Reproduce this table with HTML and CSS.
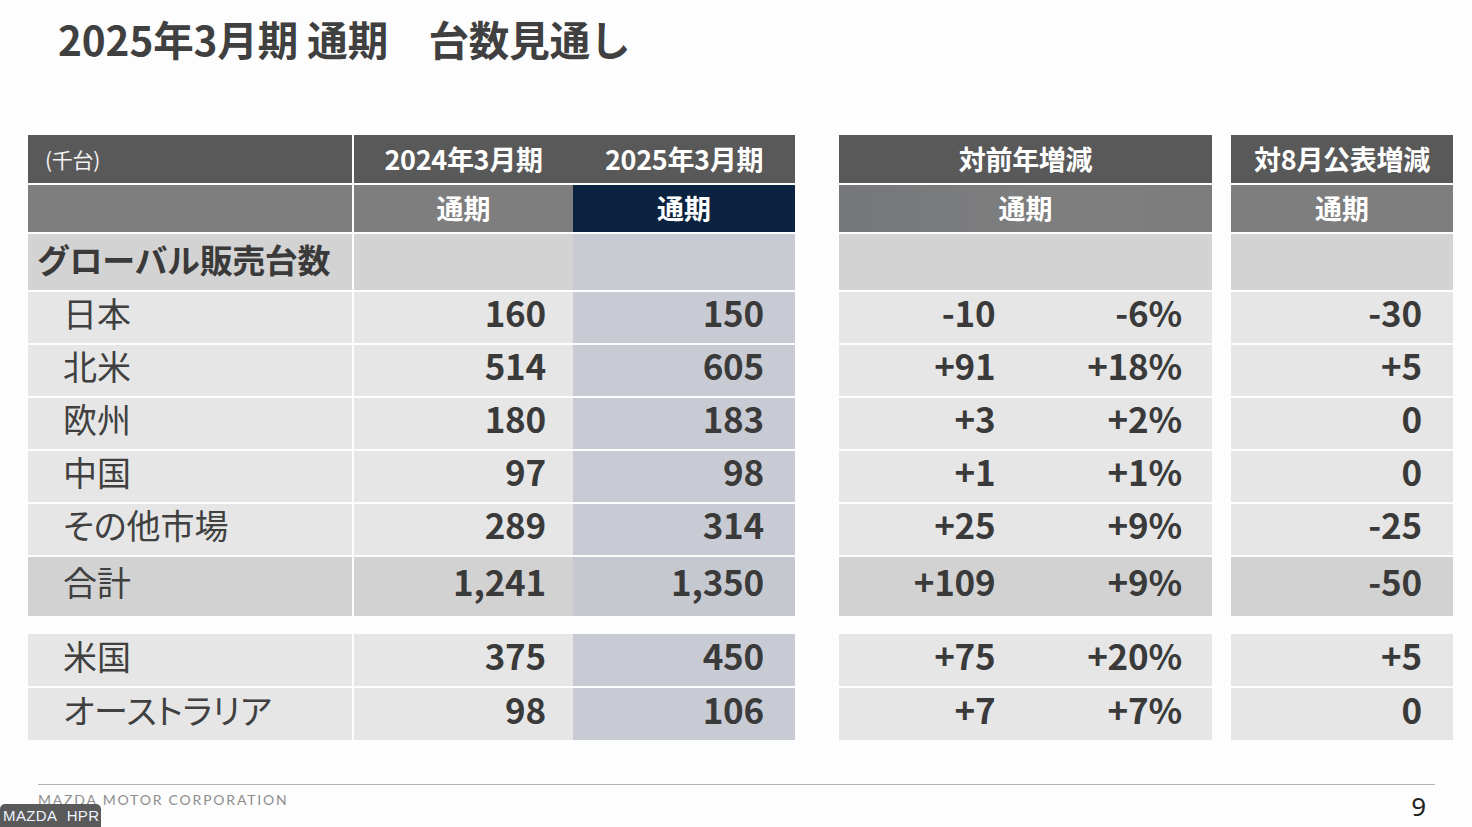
FILE: index.html
```html
<!DOCTYPE html>
<html lang="ja">
<head>
<meta charset="utf-8">
<title>2025年3月期 通期 台数見通し</title>
<link rel="stylesheet" href="styles.css">
</head>
<body>
<div class="slide">
  <h1 class="title">2025年3月期 通期　台数見通し</h1>

  <div class="tables">
    <!-- main table -->
    <div class="tbl tbl-main">
      <div class="blk">
        <div class="row r-h1">
          <div class="c c1 unit">(千台)</div>
          <div class="c c2 ctr">2024年3月期</div>
          <div class="c c3 ctr">2025年3月期</div>
        </div>
        <div class="row r-h2">
          <div class="c c1"></div>
          <div class="c c2 ctr">通期</div>
          <div class="c c3 ctr navy">通期</div>
        </div>
        <div class="row r-glb">
          <div class="c c1 glabel">グローバル販売台数</div>
          <div class="c c2"></div>
          <div class="c c3"></div>
        </div>
        <div class="row r-d"><div class="c c1 lbl">日本</div><div class="c c2 num">160</div><div class="c c3 num">150</div></div>
        <div class="row r-d"><div class="c c1 lbl">北米</div><div class="c c2 num">514</div><div class="c c3 num">605</div></div>
        <div class="row r-d"><div class="c c1 lbl">欧州</div><div class="c c2 num">180</div><div class="c c3 num">183</div></div>
        <div class="row r-d"><div class="c c1 lbl">中国</div><div class="c c2 num">97</div><div class="c c3 num">98</div></div>
        <div class="row r-d"><div class="c c1 lbl">その他市場</div><div class="c c2 num">289</div><div class="c c3 num">314</div></div>
        <div class="row r-tot"><div class="c c1 lbl">合計</div><div class="c c2 num">1,241</div><div class="c c3 num">1,350</div></div>
      </div>
      <div class="blk sub">
        <div class="row r-d r-s"><div class="c c1 lbl">米国</div><div class="c c2 num">375</div><div class="c c3 num">450</div></div>
        <div class="row r-d r-s"><div class="c c1 lbl">オーストラリア</div><div class="c c2 num">98</div><div class="c c3 num">106</div></div>
      </div>
    </div>

    <!-- year-over-year -->
    <div class="tbl tbl-yoy">
      <div class="blk">
        <div class="row r-h1"><div class="c ctr">対前年増減</div></div>
        <div class="row r-h2"><div class="c ctr grad">通期</div></div>
        <div class="row r-glb"><div class="c"></div></div>
        <div class="row r-d"><div class="c num">-10</div><div class="c num">-6%</div></div>
        <div class="row r-d"><div class="c num">+91</div><div class="c num">+18%</div></div>
        <div class="row r-d"><div class="c num">+3</div><div class="c num">+2%</div></div>
        <div class="row r-d"><div class="c num">+1</div><div class="c num">+1%</div></div>
        <div class="row r-d"><div class="c num">+25</div><div class="c num">+9%</div></div>
        <div class="row r-tot"><div class="c num">+109</div><div class="c num">+9%</div></div>
      </div>
      <div class="blk sub">
        <div class="row r-d r-s"><div class="c num">+75</div><div class="c num">+20%</div></div>
        <div class="row r-d r-s"><div class="c num">+7</div><div class="c num">+7%</div></div>
      </div>
    </div>

    <!-- vs August announcement -->
    <div class="tbl tbl-aug">
      <div class="blk">
        <div class="row r-h1"><div class="c ctr">対8月公表増減</div></div>
        <div class="row r-h2"><div class="c ctr">通期</div></div>
        <div class="row r-glb"><div class="c"></div></div>
        <div class="row r-d"><div class="c num">-30</div></div>
        <div class="row r-d"><div class="c num">+5</div></div>
        <div class="row r-d"><div class="c num">0</div></div>
        <div class="row r-d"><div class="c num">0</div></div>
        <div class="row r-d"><div class="c num">-25</div></div>
        <div class="row r-tot"><div class="c num">-50</div></div>
      </div>
      <div class="blk sub">
        <div class="row r-d r-s"><div class="c num">+5</div></div>
        <div class="row r-d r-s"><div class="c num">0</div></div>
      </div>
    </div>
  </div>

  <footer class="foot">
    <span class="corp">MAZDA MOTOR CORPORATION</span>
    <span class="page">9</span>
  </footer>

  <div class="badge">MAZDA&nbsp;&nbsp;HPR</div>
</div>
</body>
</html>
```

FILE: styles.css
```css
html, body {
  margin: 0;
  padding: 0;
  background: #fdfdfd;
}

.slide {
  position: relative;
  width: 1472px;
  height: 827px;
  overflow: hidden;
  font-family: "Noto Sans CJK JP", "Noto Sans", sans-serif;
  color: #3c3c3c;
}

.title {
  margin: 0;
  padding: 15px 0 0 58px;
  font-size: 40.5px;
  line-height: 48px;
  font-weight: 700;
  color: #404040;
  letter-spacing: -0.1px;
}

.tables {
  display: flex;
  align-items: flex-start;
  margin: 72px 0 0 28px;
}

.tbl-main { width: 767px; }
.tbl-yoy { width: 373px; margin-left: 44px; }
.tbl-aug { width: 222px; margin-left: 19px; }

.blk {
  display: flex;
  flex-direction: column;
  gap: 2px;
}
.blk.sub { margin-top: 18px; }

.row {
  display: grid;
  grid-auto-flow: column;
  grid-auto-columns: 1fr;
  flex: none;
}
.tbl-main .row { grid-template-columns: 326px 219px 222px; }

.c {
  display: flex;
  align-items: center;
  box-sizing: border-box;
  min-width: 0;
  line-height: 1.15;
}
.tbl-main .c1 { border-right: 2px solid #fdfdfd; }

.ctr { justify-content: center; }

/* header rows */
.r-h1 { height: 48px; }
.r-h1 .c {
  background: #595959;
  color: #ffffff;
  font-size: 27px;
  font-weight: 700;
  letter-spacing: -0.3px;
}
.r-h1 .unit {
  font-size: 21px;
  font-weight: 400;
  padding-left: 17px;
  color: #f2f2f2;
}

.r-h2 { height: 47px; }
.r-h2 .c {
  background: #7e7e7e;
  color: #ffffff;
  font-size: 27px;
  font-weight: 700;
  padding-bottom: 2px;
}
.r-h2 .grad { background: linear-gradient(90deg, #75777a 0%, #7f7f7f 60%, #7c7c7c 100%); }
.r-h2 .navy { background: #0b2340; }

/* group row */
.r-glb { height: 56px; }
.r-glb .c { background: #d3d3d3; }
.r-glb .c3 { background: #c9cbd3; }
.glabel {
  padding-left: 9px;
  padding-bottom: 4px;
  font-size: 33px;
  font-weight: 700;
  color: #3a3a3a;
  letter-spacing: -0.4px;
}

/* data rows */
.r-d { height: 51px; }
.r-d.r-s { height: 52px; }
.r-d .c { background: #e6e6e6; }
.r-d .c3 { background: #c9cbd4; }

.r-tot { height: 59px; }
.r-tot .c { background: #d2d2d2; }
.r-tot .c3 { background: #c6c8d0; }

.lbl {
  padding-left: 35px;
  padding-bottom: 9px;
  font-size: 34px;
  font-weight: 400;
  color: #404040;
  font-feature-settings: "palt";
}

.num {
  justify-content: flex-end;
  padding-bottom: 10px;
  font-size: 35px;
  font-weight: 700;
  color: #3a3a3a;
  letter-spacing: -0.2px;
  padding-right: 30px;
}
.tbl-main .c2.num { padding-right: 27px; }
.tbl-main .c3.num { padding-right: 31px; }
.tbl-aug .num { padding-right: 31px; }

/* footer */
.foot {
  display: flex;
  justify-content: space-between;
  align-items: flex-start;
  margin: 44px 37px 0 38px;
  border-top: 1px solid #b4b4b4;
  height: 40px;
}
.corp {
  margin-top: 7px;
  font-family: "Lato", "Noto Sans", sans-serif;
  font-size: 14px;
  line-height: 16px;
  letter-spacing: 1.8px;
  color: #8e8e8e;
}
.page {
  margin: 6px 9px 0 0;
  font-family: "Noto Sans", sans-serif;
  font-size: 26px;
  line-height: 30px;
  color: #222222;
}

.badge {
  position: absolute;
  left: 0;
  bottom: 0;
  width: 101px;
  height: 23px;
  box-sizing: border-box;
  padding-left: 3px;
  background: #5a5a5a;
  border-radius: 5px 5px 0 0;
  font-family: "Liberation Sans", "DejaVu Sans", sans-serif;
  font-size: 15px;
  line-height: 23px;
  letter-spacing: 0.4px;
  color: #eef4ff;
  white-space: nowrap;
}
```
